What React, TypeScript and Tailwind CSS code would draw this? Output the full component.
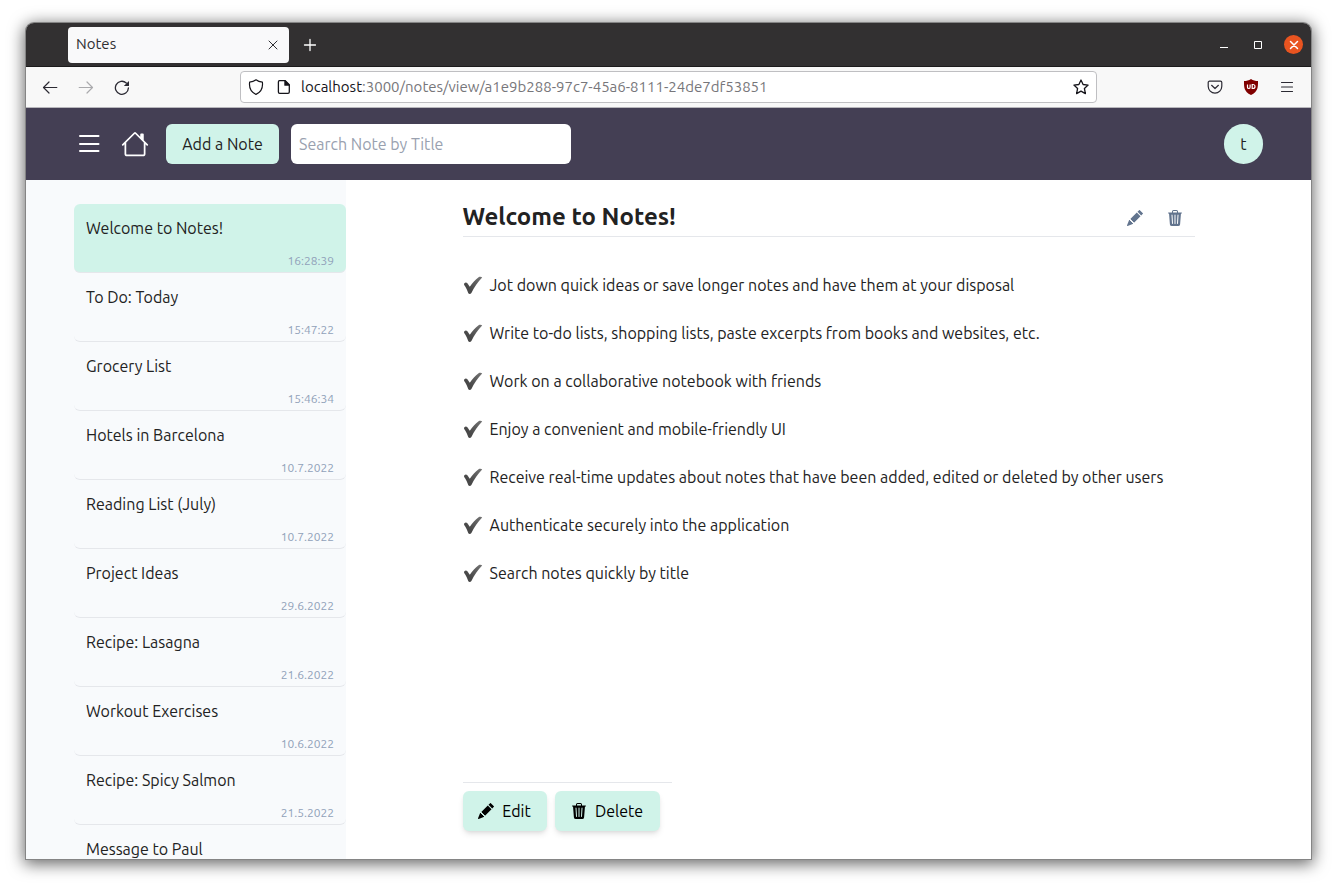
import React from "react";
import { BsHouse, BsPencilFill, BsTrash3Fill } from "react-icons/bs";

type Note = { title: string; date?: string };

const notes: Note[] = [
  { title: "Welcome to Notes!", date: "16:28:39" },
  { title: "To Do: Today", date: "15:47:22" },
  { title: "Grocery List", date: "15:46:34" },
  { title: "Hotels in Barcelona", date: "10.7.2022" },
  { title: "Reading List (July)", date: "10.7.2022" },
  { title: "Project Ideas", date: "29.6.2022" },
  { title: "Recipe: Lasagna", date: "21.6.2022" },
  { title: "Workout Exercises", date: "10.6.2022" },
  { title: "Recipe: Spicy Salmon", date: "21.5.2022" },
  { title: "Message to Paul" },
];

const features = [
  "Jot down quick ideas or save longer notes and have them at your disposal",
  "Write to-do lists, shopping lists, paste excerpts from books and websites, etc.",
  "Work on a collaborative notebook with friends",
  "Enjoy a convenient and mobile-friendly UI",
  "Receive real-time updates about notes that have been added, edited or deleted by other users",
  "Authenticate securely into the application",
  "Search notes quickly by title",
];

function Line({ d, size = 16, width = 1.2 }: { d: string; size?: number; width?: number }) {
  return (
    <svg
      width={size}
      height={size}
      viewBox="0 0 16 16"
      fill="none"
      stroke="currentColor"
      strokeWidth={width}
      strokeLinecap="round"
      strokeLinejoin="round"
      aria-hidden="true"
    >
      <path d={d} />
    </svg>
  );
}

function Check() {
  return (
    <svg width="20" height="20" viewBox="0 0 20 20" className="shrink-0" aria-hidden="true">
      <defs>
        <linearGradient id="tick" x1="0" y1="1" x2="1" y2="0">
          <stop offset="0.3" stopColor="#484848" />
          <stop offset="1" stopColor="#757575" />
        </linearGradient>
      </defs>
      <path
        fill="url(#tick)"
        d="M1.4 8.2C2.4 7.2 3.6 7.4 4.400 8.300L6.800 11.800C9.400 8 12.300 4.600 15.600 2.200C16.800 1.500 18.600 1.700 19.200 2.500C14.800 7 11.200 12 8.400 18C7.600 19.200 5.800 19.300 5.200 18C4.200 15.200 3.200 12.600 1.200 10C.9 9.400.9 8.700 1.400 8.200Z"
      />
    </svg>
  );
}

function TitleBar() {
  return (
    <div className="flex h-11 items-center justify-between border-b border-[#1c1b1c] bg-[#323031] pl-[42px] pr-2 text-white">
      <div className="flex items-center gap-[13px]">
        <div className="flex h-9 w-[221px] items-center justify-between rounded bg-[#f9f9fa] pl-2 pr-2 text-[#2f2f33]">
          <span className="text-[15px]">Notes</span>
          <button aria-label="Close tab" className="flex">
            <Line d="M4 4l8 8M12 4l-8 8" width={1} />
          </button>
        </div>
        <button aria-label="New tab" className="flex">
          <Line d="M8 2.500v11M2.500 8h11" width={1.3} />
        </button>
      </div>
      <div className="flex items-center gap-[18px]">
        <button aria-label="Minimize" className="flex">
          <svg width="16" height="16" viewBox="0 0 16 16" fill="currentColor">
            <path d="M4 10h8v1H4z" />
          </svg>
        </button>
        <button aria-label="Maximize" className="flex">
          <svg width="16" height="16" viewBox="0 0 16 16" fill="none" stroke="currentColor">
            <path d="M4.500 4.500h7v7h-7z" />
          </svg>
        </button>
        <button aria-label="Close" className="flex size-[19px] items-center justify-center rounded-full bg-[#e95420]">
          <Line d="M4.500 4.500l7 7M11.500 4.500l-7 7" width={1.5} />
        </button>
      </div>
    </div>
  );
}

function AddressBar() {
  return (
    <div className="flex h-[41px] items-center border-b border-[#b8b7bc] bg-[#f8f8f8] text-[#2b2a33]">
      <div className="flex w-[214px] shrink-0 items-center gap-5 pl-4">
        <button aria-label="Back" className="flex">
          <Line d="M14.800 8.500H1.500M7 3L1.500 8.500L7 14" />
        </button>
        <button aria-label="Forward" className="flex text-[#aaaaad]">
          <Line d="M1.200 8.500h13.300M9 3L14.500 8.500L9 14" />
        </button>
        <button aria-label="Reload" className="flex">
          <svg width="16" height="16" viewBox="0 0 16 16" fill="none" aria-hidden="true">
            <path d="M14.400 9A6.500 6.500 0 1 1 12.300 4" stroke="currentColor" strokeWidth="1.300" strokeLinecap="round" />
            <path d="M15 2V6.400a.6.6 0 0 1-.6.6H9.800z" fill="currentColor" />
          </svg>
        </button>
      </div>
      <div className="flex h-8 flex-1 items-center rounded border border-[#bfbfc2] bg-white px-[7px] text-[#15141a]">
        <Line d="M8 .8C9.600 2 12 2.900 14.400 3.200C15 8.400 13.200 13.200 8 15.400C2.800 13.200 1 8.400 1.600 3.200C4 2.900 6.400 2 8 .8Z" />
        <svg width="16" height="16" viewBox="0 0 16 16" fill="none" className="ml-3" aria-hidden="true">
          <path
            d="M3.500 1.700h5.700l4.100 4.100v7.200a1.300 1.300 0 0 1-1.300 1.300H3.700A1.300 1.300 0 0 1 2.400 13V3a1.300 1.300 0 0 1 1.100-1.300z"
            stroke="currentColor"
            strokeWidth="1.300"
          />
          <path d="M8.300 1.500h1.200l4 4v1.300H8.900a.6.6 0 0 1-.6-.6z" fill="currentColor" />
        </svg>
        <p className="ml-[9px] flex-1 whitespace-nowrap text-[15px] text-[#77767a]">
          <span className="text-[#15141a]">localhost</span>
          :3000/notes/view/a1e9b288-97c7-45a6-8111-24de7df53851
        </p>
        <button aria-label="Bookmark" className="flex">
          <Line d="M8 1L10.100 5.500L15.100 6.100L11.400 9.500L12.400 14.600L8 12.100L3.600 14.600L4.600 9.500L.9 6.100L5.900 5.500Z" width={1.3} />
        </button>
      </div>
      <div className="flex w-[214px] shrink-0 items-center justify-end gap-5 pr-4">
        <button aria-label="Save to Pocket" className="flex">
          <Line d="M2.500 2.200h11a1.300 1.300 0 0 1 1.300 1.300v3.800a6.800 6.800 0 0 1-13.600 0V3.500a1.300 1.300 0 0 1 1.300-1.300zM4.600 6.300L8 9.500l3.400-3.200" width={1.2} />
        </button>
        <button aria-label="uBlock Origin" className="flex">
          <svg width="16" height="16" viewBox="0 0 16 16" aria-hidden="true">
            <path d="M8 0C10 1.400 12.500 2 15 2C15 8 15.300 12.500 8 16C.7 12.500 1 8 1 2C3.500 2 6 1.400 8 0Z" fill="#800000" />
            <path d="M4.500 5.500V8.200a1.300 1.300 0 0 0 2.600 0V5.500M9.200 5.500v4h.8a2 2 0 0 0 0-4z" fill="none" stroke="#fff" strokeWidth="1.200" />
          </svg>
        </button>
        <button aria-label="Open menu" className="flex">
          <Line d="M2.500 3.500h11M2.500 8h11M2.500 12.500h11" width={1.2} />
        </button>
      </div>
    </div>
  );
}

function AppHeader() {
  return (
    <header className="flex h-[72px] shrink-0 items-center bg-[#443f54] px-12">
      <button aria-label="Toggle sidebar" className="flex text-white">
        <svg width="30" height="30" viewBox="0 0 30 30" stroke="currentColor" strokeWidth="2" strokeLinecap="round" aria-hidden="true">
          <path d="M6 7h18.500M6 15h18.500M6 22h18.500" />
        </svg>
      </button>
      <a href="#home" aria-label="Home" className="ml-[17px] text-white">
        <BsHouse size={28} />
      </a>
      <button className="ml-[17px] h-10 w-[113px] whitespace-nowrap rounded-md bg-[#d0f3e9] text-base text-[#222]">Add a Note</button>
      <input
        type="search"
        aria-label="Search Note by Title"
        placeholder="Search Note by Title"
        className="ml-3 h-10 w-[280px] rounded-md bg-white px-2 text-base placeholder:text-gray-400"
      />
      <button aria-label="Account" className="ml-auto h-10 w-[39px] rounded-full bg-[#d0f3e9] text-base text-[#222]">
        t
      </button>
    </header>
  );
}

function Sidebar() {
  return (
    <nav aria-label="Notes" className="w-80 shrink-0 overflow-hidden bg-slate-50 pl-12 pt-6">
      <ul>
        {notes.map((note, index) => (
          <li key={note.title}>
            <a
              href="#note"
              className={
                index === 0
                  ? "flex h-[69px] flex-col justify-between rounded-md border-b border-gray-200 bg-[#d0f3e9] px-3 pb-[3px] pt-3"
                  : "flex h-[69px] flex-col justify-between rounded-md border-b border-gray-200 px-3 pb-[3px] pt-3"
              }
            >
              <span className="text-base">{note.title}</span>
              {note.date && <span className="text-right text-xs text-slate-400">{note.date}</span>}
            </a>
          </li>
        ))}
      </ul>
    </nav>
  );
}

function NoteView() {
  return (
    <main className="flex min-w-0 flex-1 flex-col bg-white pb-7 pt-6">
      <article className="mx-auto flex w-full max-w-[732px] flex-1 flex-col">
        <header className="flex h-[33px] items-start justify-between border-b border-gray-200">
          <h1 className="text-2xl leading-[26px] font-bold">Welcome to Notes!</h1>
          <div className="flex gap-6 pr-3 pt-1.5 text-slate-500">
            <button aria-label="Edit note">
              <BsPencilFill size={16} />
            </button>
            <button aria-label="Delete note">
              <BsTrash3Fill size={16} />
            </button>
          </div>
        </header>
        <ul className="flex flex-1 flex-col gap-6 pt-9">
          {features.map((text) => (
            <li key={text} className="flex h-6 items-center gap-[7px] whitespace-nowrap">
              <Check />
              {text}
            </li>
          ))}
        </ul>
        <footer className="flex gap-2 self-start border-t border-gray-200 pr-3 pt-2">
          <button className="flex h-10 w-[84px] items-center justify-center gap-2 rounded-md bg-[#d0f3e9] text-base text-black shadow-md">
            <BsPencilFill size={16} />
            Edit
          </button>
          <button className="flex h-10 w-[105px] items-center justify-center gap-2 rounded-md bg-[#d0f3e9] text-base text-black shadow-md">
            <BsTrash3Fill size={16} />
            Delete
          </button>
        </footer>
      </article>
    </main>
  );
}

export default function App() {
  return (
    <div className="h-screen bg-white px-[26px] pb-[29px] pt-[23px] font-['Ubuntu','Noto_Sans',sans-serif] text-[#222]">
      <div className="flex h-full flex-col overflow-hidden rounded-t-lg shadow-[0_0_0_1px_#858585,0_3px_16px_2px_rgba(0,0,0,0.6)]">
        <TitleBar />
        <AddressBar />
        <AppHeader />
        <div className="flex min-h-0 flex-1">
          <Sidebar />
          <NoteView />
        </div>
      </div>
    </div>
  );
}
